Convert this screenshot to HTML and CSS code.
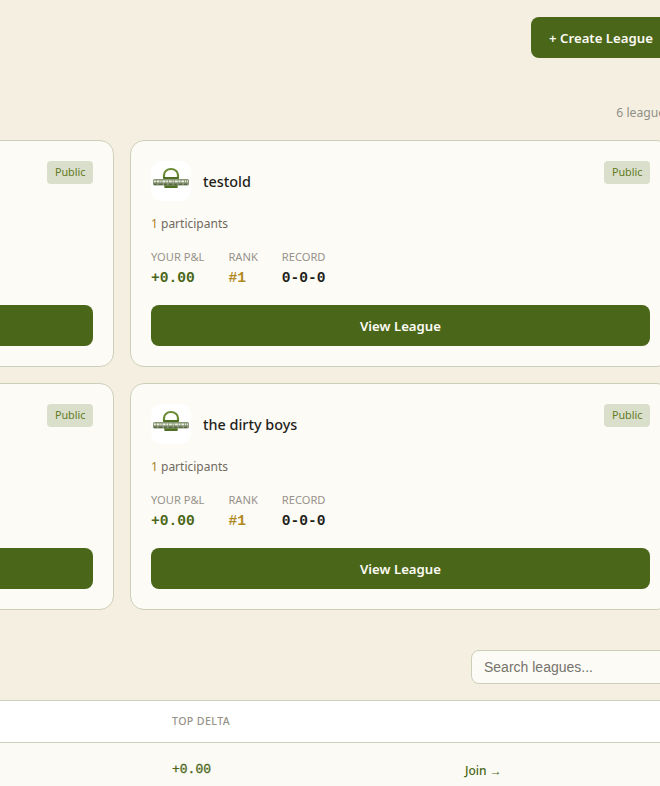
FILE: index.html
```html
<!DOCTYPE html>
<html lang="en">
<head>
<meta charset="utf-8">
<title>Leagues</title>
<link rel="stylesheet" href="styles.css">
</head>
<body>
<main class="page">
  <div class="top"><button class="btn create">+ Create League</button></div>
  <div class="count">6 leagues</div>
  <section class="grid">
    <article class="card">
      <div class="head"><div class="who"><span class="logo"><svg viewBox="0 0 40 40" width="40" height="40"><use href="#mark"/></svg></span><h3>my league</h3></div><span class="tag">Public</span></div>
      <p class="people"><b>1</b> participants</p>
      <div class="stats"><div><small>YOUR P&amp;L</small><strong class="g">+0.00</strong></div><div><small>RANK</small><strong class="o">#1</strong></div><div><small>RECORD</small><strong>0-0-0</strong></div></div>
      <button class="btn view">View League</button>
    </article>
    <article class="card">
      <div class="head"><div class="who"><span class="logo"><svg viewBox="0 0 40 40" width="40" height="40" aria-hidden="true">
        <defs>
          <filter id="soft" x="-5%" y="-5%" width="110%" height="110%"><feGaussianBlur stdDeviation="0.45"/></filter>
          <g id="mark" filter="url(#soft)">
            <path d="M13 17v-3a7 6 0 0 1 14 0v3" fill="none" stroke="#6a8a34" stroke-width="2.200"/>
            <path d="M12 16h16l-1.500 11h-13z" fill="#4f7020"/>
            <rect x="2" y="18" width="36" height="6.500" rx="1.500" fill="#8a9878"/>
            <path d="M3 20.300h34" stroke="#eef1e6" stroke-width="1.800" stroke-dasharray="1.800 1 2.600 .9 1.200 1 3 .8"/>
            <path d="M3 23.200h34" stroke="#3a4a28" stroke-width=".9" stroke-dasharray="3 1.500 4 1.500"/>
          </g>
        </defs>
        <use href="#mark"/></svg></span><h3>testold</h3></div><span class="tag">Public</span></div>
      <p class="people"><b>1</b> participants</p>
      <div class="stats"><div><small>YOUR P&amp;L</small><strong class="g">+0.00</strong></div><div><small>RANK</small><strong class="o">#1</strong></div><div><small>RECORD</small><strong>0-0-0</strong></div></div>
      <button class="btn view">View League</button>
    </article>
    <article class="card">
      <div class="head"><div class="who"><span class="logo"><svg viewBox="0 0 40 40" width="40" height="40"><use href="#mark"/></svg></span><h3>sunday crew</h3></div><span class="tag">Public</span></div>
      <p class="people"><b>1</b> participants</p>
      <div class="stats"><div><small>YOUR P&amp;L</small><strong class="g">+0.00</strong></div><div><small>RANK</small><strong class="o">#1</strong></div><div><small>RECORD</small><strong>0-0-0</strong></div></div>
      <button class="btn view">View League</button>
    </article>
    <article class="card">
      <div class="head"><div class="who"><span class="logo"><svg viewBox="0 0 40 40" width="40" height="40"><use href="#mark"/></svg></span><h3>the dirty boys</h3></div><span class="tag">Public</span></div>
      <p class="people"><b>1</b> participants</p>
      <div class="stats"><div><small>YOUR P&amp;L</small><strong class="g">+0.00</strong></div><div><small>RANK</small><strong class="o">#1</strong></div><div><small>RECORD</small><strong>0-0-0</strong></div></div>
      <button class="btn view">View League</button>
    </article>
  </section>
  <div class="search"><input type="text" placeholder="Search leagues..."></div>
  <table class="list">
    <thead><tr><th class="c1">LEAGUE</th><th class="c2">TOP DELTA</th><th class="c3"></th></tr></thead>
    <tbody><tr><td class="c1">open league</td><td class="c2 delta">+0.00</td><td class="c3"><a href="#" class="join">Join →</a></td></tr></tbody>
  </table>
</main>
</body>
</html>
```
FILE: styles.css
```css
* { box-sizing: border-box; }
html, body { margin: 0; height: 786px; overflow: hidden; background: #f5efe2; }
body { font-family: "Noto Sans", sans-serif; color: #1f1f1a; }
.page { width: 1098px; margin-left: -427px; padding-top: 17px; }
.top { display: flex; justify-content: flex-end; }
.btn { border: 0; border-radius: 8px; background: #4a6719; color: #fdfbf5; font: 600 13.200px "Noto Sans", sans-serif; height: 41px; }
.create { width: 140px; }
.count { margin-top: 46px; height: 18px; text-align: right; font-size: 12.200px; line-height: 18px; color: #8f8f86; }
.grid { margin-top: 18px; display: grid; grid-template-columns: 1fr 1fr; gap: 16px; }
.card { height: 227px; padding: 20px; background: #fdfbf6; border: 1px solid #cdd0b8; border-radius: 14px; display: flex; flex-direction: column; }
.head { display: flex; justify-content: space-between; align-items: flex-start; }
.who { display: flex; align-items: center; gap: 12px; }
.logo { width: 40px; height: 40px; border-radius: 10px; background: #fff; display: block; }
.logo svg { display: block; }
h3 { margin: 0; font-size: 14.400px; font-weight: 500; color: #1f1f1a; }
.tag { height: 23px; padding: 0 7.500px; background: #dadfcc; border-radius: 4px; font-size: 10.800px; line-height: 21px; color: #637a22; }
.people { margin: 14px 0 0; font-size: 12px; line-height: 17px; color: #6f6a60; }
.people b { font-weight: 400; color: #a8832a; }
.stats { margin-top: 18px; display: flex; gap: 24px; }
.stats small { display: block; font-size: 11.150px; line-height: 14px; color: #96928a; }
.stats strong { display: block; margin-top: 5px; font: 700 14.600px/18px "Liberation Mono", monospace; color: #1f1f1a; }
.stats .g { color: #4a6719; }
.stats .o { color: #b08a1e; }
.view { margin-top: auto; width: 100%; }
.search { margin-top: 40px; display: flex; justify-content: flex-end; }
.search input { width: 200px; height: 34px; padding: 0 12px; background: #fdfbf6; border: 1px solid #cdd0b8; border-radius: 8px; font: 14px "Liberation Sans", sans-serif; }
.search input::placeholder { color: #75736c; opacity: 1; }
.list { margin-top: 16px; width: 100%; border-collapse: collapse; table-layout: fixed; }
.list th { height: 42px; background: #fff; border-top: 1px solid #cdd0b8; border-bottom: 1px solid #cdd0b8; text-align: left; font-size: 10.600px; font-weight: 500; letter-spacing: .4px; color: #96928a; padding: 0 0 1px; }
.list td { height: 52px; background: #fbfaf4; padding: 0; font-size: 12px; }
.c1 { width: 599px; }
.c2 { width: 293px; }
.list .delta { font-family: "Liberation Mono", monospace; font-size: 13px; font-weight: 400; -webkit-text-stroke: .3px #4a6719; color: #4a6719; padding-top: 1px; }
.list .c3 { padding-top: 3px; }
.join { color: #4a6719; font-weight: 500; font-size: 12px; text-decoration: none; }
```
